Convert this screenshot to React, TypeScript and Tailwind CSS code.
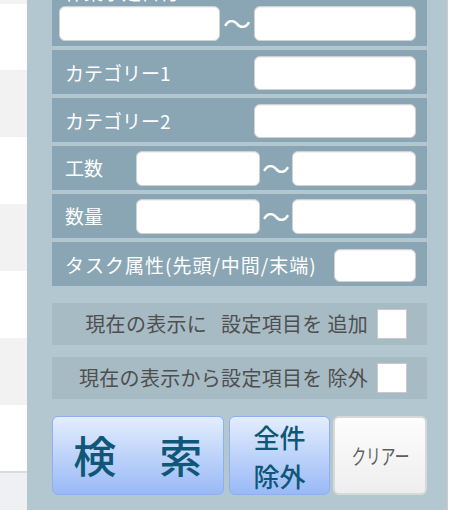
import React from 'react';

const Field: React.FC<{ className?: string }> = ({ className = '' }) => (
  <div
    className={`bg-white border border-[#d2d2d2] rounded-[6px] shadow-[inset_0_1px_1px_rgba(0,0,0,0.06)] ${className}`}
  />
);

const Tilde: React.FC<{ className?: string }> = ({ className = '' }) => (
  <span className={`flex justify-center items-center text-white text-[28px] leading-none -mt-[2px] ${className}`}>～</span>
);

const App: React.FC = () => {
  return (
    <div className="flex w-[450px] h-[510px] overflow-hidden bg-white font-['Noto_Sans_CJK_JP','Noto_Sans',sans-serif]">
      {/* list behind the panel */}
      <div className="w-[27px] flex flex-col shrink-0">
        <div className="h-[4px] bg-[#f2f2f2]" />
        <div className="h-[66px] bg-white" />
        <div className="h-[67px] bg-[#f2f2f2]" />
        <div className="h-[67px] bg-white" />
        <div className="h-[67px] bg-[#f2f2f2]" />
        <div className="h-[67px] bg-white" />
        <div className="h-[67px] bg-[#f2f2f2]" />
        <div className="h-[66px] bg-white" />
        <div className="flex-1 bg-[#eef0f4] border-t-2 border-[#dcdcdc]" />
      </div>

      {/* search panel */}
      <div className="w-[420px] shrink-0 bg-[#b3c7d0] pl-[25px] pr-[20px] flex flex-col">
        {/* date range (scrolled) */}
        <div className="-mt-[22px] bg-[#8aa6b4] pt-[2px] pb-[5px] pl-[7px] pr-[11px] flex flex-col">
          <div className="h-[26px] leading-[24px] text-white text-[19px] pl-[6px]">作業予定日付</div>
          <div className="flex items-center h-[35px]">
            <Field className="w-[161px] h-full" />
            <Tilde className="w-[34px]" />
            <Field className="w-[162px] h-full" />
          </div>
        </div>

        <div className="mt-[4px] h-[44px] bg-[#8aa6b4] flex items-center justify-between pl-[13px] pr-[11px] pt-[2px]">
          <span className="text-white text-[19px]">カテゴリー1</span>
          <Field className="w-[162px] h-[34px]" />
        </div>

        <div className="mt-[4px] h-[44px] bg-[#8aa6b4] flex items-center justify-between pl-[13px] pr-[11px] pt-[2px]">
          <span className="text-white text-[19px]">カテゴリー2</span>
          <Field className="w-[162px] h-[34px]" />
        </div>

        <div className="mt-[4px] h-[44px] bg-[#8aa6b4] flex items-center pl-[13px] pr-[11px] pt-[1px]">
          <span className="text-white text-[19px] w-[71px]">工数</span>
          <Field className="w-[124px] h-[35px]" />
          <Tilde className="w-[32px]" />
          <Field className="w-[124px] h-[35px]" />
        </div>

        <div className="mt-[4px] h-[44px] bg-[#8aa6b4] flex items-center pl-[13px] pr-[11px] pt-[1px]">
          <span className="text-white text-[19px] w-[71px]">数量</span>
          <Field className="w-[124px] h-[35px]" />
          <Tilde className="w-[32px]" />
          <Field className="w-[124px] h-[35px]" />
        </div>

        <div className="mt-[4px] h-[44px] bg-[#8aa6b4] flex items-center justify-between pl-[13px] pr-[11px] pt-[3px]">
          <span className="text-white text-[19px] tracking-[1px]">タスク属性(先頭/中間/末端)</span>
          <Field className="w-[82px] h-[33px]" />
        </div>

        {/* checkbox rows */}
        <div className="mt-[17px] h-[42px] bg-[#a7bbc5] flex items-center justify-end pr-[20px]">
          <span className="text-[#4f4f4f] text-[20px] tracking-[0.3px] mr-[9px] whitespace-nowrap">
            現在の表示に<span className="ml-[14px]">設定項目を 追加</span>
          </span>
          <div className="w-[30px] h-[30px] bg-white border border-[#c9c9c9]" />
        </div>

        <div className="mt-[12px] h-[42px] bg-[#a7bbc5] flex items-center justify-end pr-[20px]">
          <span className="text-[#4f4f4f] text-[20px] tracking-[0.3px] mr-[9px] whitespace-nowrap">現在の表示から設定項目を 除外</span>
          <div className="w-[30px] h-[30px] bg-white border border-[#c9c9c9]" />
        </div>

        {/* buttons */}
        <div className="mt-[17px] h-[79px] flex">
          <button className="w-[172px] h-full rounded-[6px] border border-[#8db0f2] bg-gradient-to-b from-[#e4edfd] to-[#99b9f6] text-[#0e5777] text-[43px] font-medium leading-none pb-[2px]">
            検　索
          </button>
          <button className="ml-[5px] w-[102px] h-full rounded-[6px] border border-[#8db0f2] bg-gradient-to-b from-[#e4edfd] to-[#99b9f6] text-[#0e5777] text-[26px] font-medium leading-[39px] flex flex-col items-center justify-center">
            <span>全件</span>
            <span>除外</span>
          </button>
          <button className="ml-[3px] w-[94px] h-full rounded-[6px] border-2 border-[#d8d8d8] bg-gradient-to-b from-[#fdfdfd] to-[#eeeeee] text-[#5e5e5e] flex items-center justify-center">
            <span className="inline-block text-[21px] scale-x-[0.7] whitespace-nowrap">クリアー</span>
          </button>
        </div>
      </div>

      {/* right edge */}
      <div className="w-[1px] bg-[#c9cdd0] shrink-0" />
      <div className="flex-1 bg-white" />
    </div>
  );
};

export default App;
